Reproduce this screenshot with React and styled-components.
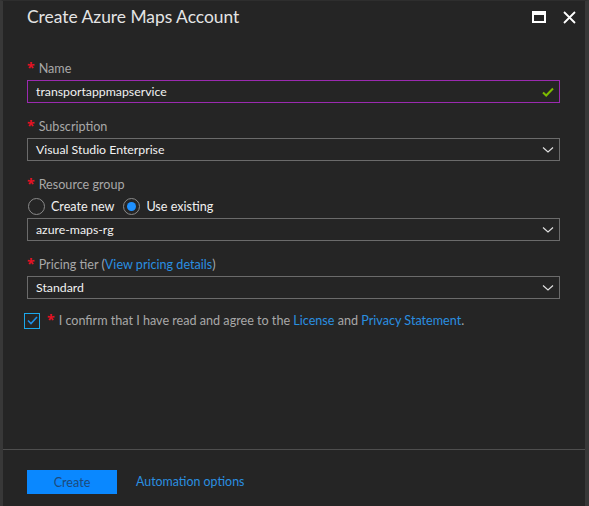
import React, { useState } from 'react';
import styled, { createGlobalStyle } from 'styled-components';

const GlobalStyle = createGlobalStyle`
  html, body {
    margin: 0;
    padding: 0;
    background: #252525;
  }
  body {
    font-family: Lato, 'Open Sans', sans-serif;
  }
`;

const Blade = styled.div`
  width: 589px;
  height: 506px;
  box-sizing: border-box;
  background: #252525;
  border-left: 3px solid #383838;
  border-right: 4px solid #383838;
  border-top: 1px solid #2e2e2e;
  display: flex;
  flex-direction: column;
  color: #a8a8a8;
`;

const Header = styled.div`
  height: 43px;
  display: flex;
  align-items: flex-start;
  justify-content: space-between;
  padding: 0 9px 0 24px;
`;

const Title = styled.h1`
  margin: 0;
  padding-top: 5px;
  font-size: 17.4px;
  font-weight: 400;
  color: #e4e4e4;
`;

const Controls = styled.div`
  display: flex;
  gap: 16px;
  padding-top: 9px;
`;

const IconButton = styled.button`
  background: none;
  border: none;
  padding: 0;
  width: 14px;
  height: 14px;
  display: flex;
  align-items: center;
  justify-content: center;
  cursor: pointer;
`;

const Body = styled.div`
  flex: 1;
  padding: 16px 25px 0 24px;
  font-size: 12.6px;
`;

const Field = styled.div`
  margin-bottom: ${(p) => (p.last ? 12 : 15)}px;
`;

const Label = styled.div`
  height: 18px;
  line-height: 18px;
  margin-bottom: 2px;
  display: flex;
  align-items: center;
  color: #a8a8a8;
`;

const Star = styled.span`
  color: #e81123;
  font-family: 'Open Sans', sans-serif;
  font-weight: 700;
  font-size: 14px;
  margin-right: 4px;
  position: relative;
  top: -1px;
`;

const Link = styled.a`
  color: #2a8fe0;
  text-decoration: none;
  cursor: pointer;
`;

const Box = styled.div`
  height: 23px;
  box-sizing: border-box;
  border: 1px solid ${(p) => (p.focus ? '#9b2ab0' : '#6b6b6b')};
  display: flex;
  align-items: center;
  justify-content: space-between;
  padding: 0 5px 0 8px;
  color: #f2f2f2;
  font-size: 12.3px;
`;

const RadioRow = styled.div`
  display: flex;
  align-items: center;
  gap: 9px;
  height: 20px;
  margin-bottom: 2px;
  margin-left: 1px;
`;

const RadioOption = styled.label`
  display: flex;
  align-items: center;
  gap: 6px;
  color: #f0f0f0;
  font-size: 12.6px;
  cursor: pointer;
`;

const RadioCircle = styled.span`
  width: 15px;
  height: 15px;
  border: 1px solid #8a8a8a;
  border-radius: 50%;
  display: flex;
  align-items: center;
  justify-content: center;
  &::after {
    content: '';
    width: 9px;
    height: 9px;
    border-radius: 50%;
    background: ${(p) => (p.on ? '#1e90ff' : 'transparent')};
  }
`;

const ConfirmRow = styled.div`
  display: flex;
  align-items: center;
  margin-left: -3px;
  color: #a8a8a8;
  font-size: 12.6px;
`;

const CheckBox = styled.span`
  width: 16px;
  height: 16px;
  box-sizing: border-box;
  border: 1px solid #1aa7ec;
  display: flex;
  align-items: center;
  justify-content: center;
  margin-right: 7px;
`;

const Footer = styled.div`
  border-top: 1px solid #4e4e4e;
  height: 57px;
  box-sizing: border-box;
  padding: 20px 0 0 24px;
  display: flex;
  align-items: flex-start;
  gap: 19px;
`;

const PrimaryButton = styled.button`
  width: 90px;
  height: 24px;
  border: none;
  background: #0a88ff;
  color: #1d4a7c;
  font-family: inherit;
  font-size: 12.6px;
  cursor: pointer;
`;

const FooterLink = styled(Link)`
  line-height: 24px;
  font-size: 12.4px;
`;

const Chevron = () => (
  <svg width="12" height="8" viewBox="0 0 12 8">
    <path d="M1 1.5 L6 6 L11 1.5" fill="none" stroke="#e0e0e0" strokeWidth="1.2" />
  </svg>
);

const Select = ({ children }) => (
  <Box>
    {children}
    <Chevron />
  </Box>
);

const App = () => {
  const [existing, setExisting] = useState(true);

  return (
    <>
      <GlobalStyle />
      <Blade>
        <Header>
          <Title>Create Azure Maps Account</Title>
          <Controls>
            <IconButton aria-label="maximize">
              <svg width="14" height="12" viewBox="0 0 14 12">
                <rect x="1" y="1" width="12" height="10" fill="none" stroke="#fff" strokeWidth="2" />
                <rect x="1" y="1" width="12" height="3" fill="#fff" />
              </svg>
            </IconButton>
            <IconButton aria-label="close">
              <svg width="13" height="13" viewBox="0 0 13 13">
                <path d="M1 1 L12 12 M12 1 L1 12" stroke="#fff" strokeWidth="1.8" />
              </svg>
            </IconButton>
          </Controls>
        </Header>

        <Body>
          <Field>
            <Label><Star>*</Star>Name</Label>
            <Box focus>
              transportappmapservice
              <svg width="12" height="10" viewBox="0 0 12 10">
                <path d="M1 5.5 L4.2 8.5 L11 1.5" fill="none" stroke="#7cbb00" strokeWidth="2" />
              </svg>
            </Box>
          </Field>

          <Field>
            <Label><Star>*</Star>Subscription</Label>
            <Select>Visual Studio Enterprise</Select>
          </Field>

          <Field>
            <Label><Star>*</Star>Resource group</Label>
            <RadioRow>
              <RadioOption onClick={() => setExisting(false)}>
                <RadioCircle on={!existing} />
                Create new
              </RadioOption>
              <RadioOption onClick={() => setExisting(true)}>
                <RadioCircle on={existing} />
                Use existing
              </RadioOption>
            </RadioRow>
            <Select>azure-maps-rg</Select>
          </Field>

          <Field last>
            <Label>
              <Star>*</Star>Pricing tier (<Link>View pricing details</Link>)
            </Label>
            <Select>Standard</Select>
          </Field>

          <ConfirmRow>
            <CheckBox>
              <svg width="11" height="9" viewBox="0 0 11 9">
                <path d="M1 4.5 L4 7.5 L10 1" fill="none" stroke="#1e8fe8" strokeWidth="1.6" />
              </svg>
            </CheckBox>
            <Star>*</Star>
            I confirm that I have read and agree to the&nbsp;<Link>License</Link>&nbsp;and&nbsp;
            <Link>Privacy Statement</Link>.
          </ConfirmRow>
        </Body>

        <Footer>
          <PrimaryButton>Create</PrimaryButton>
          <FooterLink>Automation options</FooterLink>
        </Footer>
      </Blade>
    </>
  );
};

export default App;
